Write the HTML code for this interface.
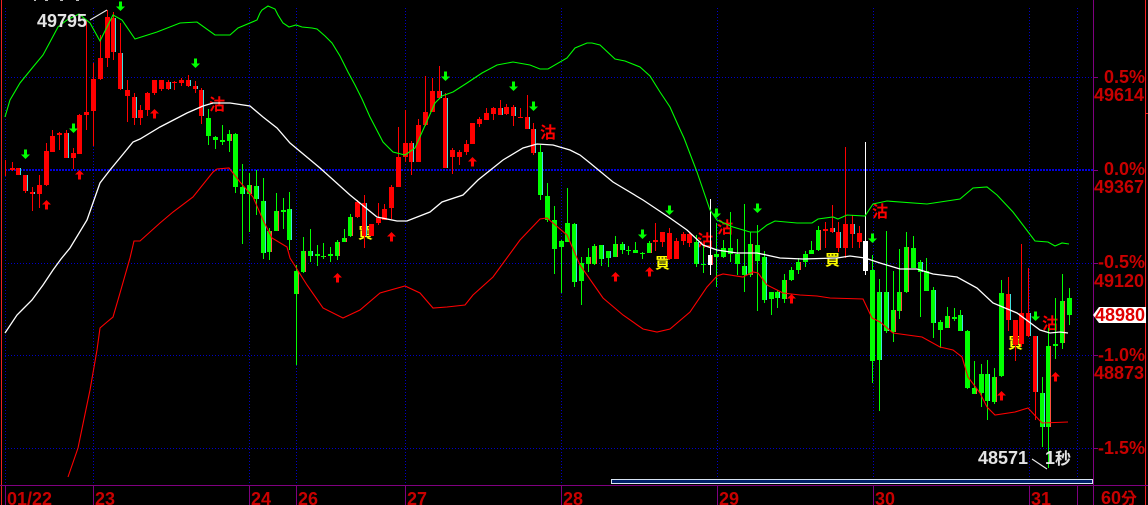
<!DOCTYPE html>
<html><head><meta charset="utf-8"><style>
html,body{margin:0;padding:0;background:#000;width:1148px;height:505px;overflow:hidden}
svg{display:block}
.a{font:bold 18px "Liberation Sans",sans-serif;fill:#c80000}
.w{font:bold 18px "Liberation Sans",sans-serif;fill:#e4e4e4}
.s{font:16px "WenQuanYi Zen Hei","Noto Sans CJK TC",sans-serif;fill:#f00;font-weight:bold}
.b{font:15px "WenQuanYi Zen Hei","Noto Sans CJK TC",sans-serif;fill:#ff0;font-weight:bold}
.c{font-family:"WenQuanYi Zen Hei","Noto Sans CJK TC",sans-serif;font-size:16px}
</style></head><body>
<svg width="1148" height="505" viewBox="0 0 1148 505" xmlns="http://www.w3.org/2000/svg">
<rect width="1148" height="505" fill="#000"/>
<g fill="none" stroke="#0000c8" stroke-dasharray="1 2" shape-rendering="crispEdges">
<path d="M5 77.5H1093M5 263.5H1093M5 355.5H1093M5 448.5H1093"/>
<path d="M5.5 8V484M93.5 8V484M249.5 8V484M296.5 8V484M405.5 8V484M561.5 8V484M717.5 8V484M873.5 8V484M1029.5 8V484M1077.5 8V484"/>
</g>
<path d="M5 170H1093" fill="none" stroke="#0000e0" stroke-width="2" stroke-dasharray="2 1" shape-rendering="crispEdges"/>
<text class="s" x="209" y="110">沽</text>
<text class="s" x="540" y="138">沽</text>
<text class="s" x="697" y="246">沽</text>
<text class="s" x="717" y="233">沽</text>
<text class="s" x="872" y="217">沽</text>
<text class="s" x="1042" y="329">沽</text>
<text class="b" x="358" y="238">買</text>
<text class="b" x="655" y="268">買</text>
<text class="b" x="825" y="265">買</text>
<text class="b" x="1008" y="348">買</text>
<g fill="none" shape-rendering="crispEdges">
<path stroke="#f00" d="M5.5 160V176M12.5 162V171M18.5 168V175M25.5 175V193M32.5 187V211M39.5 175V208M46.5 143V186M52.5 130V152M59.5 132V150M66.5 130V158M73.5 148V169M79.5 114V154M86.5 20V130M93.5 63V146M100.5 35V80M107.5 10V67M113.5 12V60M120.5 23V90M127.5 80V122M134.5 93V125M140.5 105V125M147.5 92V116M154.5 80V95M161.5 80V91M168.5 80V90M174.5 81V90M181.5 78V86M188.5 75V87M195.5 81V93M201.5 88V124M357.5 200V218M364.5 195V248M371.5 224V236M378.5 203V225M384.5 204V220M391.5 185V219M398.5 127V187M405.5 110V162M411.5 141V175M418.5 119V162M425.5 76V126M432.5 78V112M439.5 66V98M445.5 93V168M452.5 148V174M459.5 150V165M466.5 140V155M472.5 123V144M479.5 117V127M486.5 108V120M493.5 107V120M500.5 100V115M506.5 104V115M513.5 105V126M520.5 108V118M527.5 95V129M533.5 123V155M655.5 223V251M662.5 232V247M669.5 228V260M676.5 238V259M683.5 232V245M689.5 233V247M825.5 222V248M832.5 205V233M838.5 222V252M845.5 147V258M852.5 215V248M859.5 226V248M1008.5 277V331M1015.5 320V361M1021.5 244V347M1028.5 268V337M1035.5 336V420"/>
<path stroke="#f00" stroke-width="5" d="M12.5 168V170M18.5 168V175M25.5 175V191M32.5 192V194M39.5 185V194M46.5 151V185M52.5 136V152M59.5 133V135M66.5 133V158M73.5 153V158M79.5 115V154M86.5 112V115M93.5 79V111M100.5 58V79M107.5 17V58M113.5 18V52M120.5 53V89M127.5 90V96M134.5 97V118M140.5 110V118M147.5 93V110M154.5 80V93M161.5 80V89M168.5 82V89M174.5 82V83M181.5 80V83M188.5 80V86M195.5 86V89M201.5 90V116M357.5 202V217M364.5 203V236M371.5 224V236M378.5 218V223M384.5 209V220M391.5 187V208M398.5 157V187M405.5 143V157M411.5 143V162M418.5 125V162M425.5 112V125M432.5 91V112M439.5 91V98M445.5 98V168M452.5 150V157M459.5 152V157M466.5 144V152M472.5 123V144M479.5 119V124M486.5 113V120M493.5 108V114M500.5 108V115M506.5 107V114M513.5 107V116M520.5 117V118M527.5 117V129M533.5 129V153M655.5 240V242M662.5 232V242M669.5 233V259M676.5 241V259M683.5 234V241M689.5 234V243M825.5 229V231M832.5 228V232M838.5 232V248M845.5 224V248M852.5 224V234M859.5 233V242M1008.5 294V320M1015.5 320V345M1021.5 313V344M1028.5 313V336M1035.5 336V392"/>
<path stroke="#0f0" d="M208.5 109V145M215.5 136V149M222.5 125V145M229.5 130V152M235.5 133V193M242.5 164V244M249.5 173V232M256.5 170V215M263.5 178V259M269.5 228V260M276.5 193V231M283.5 198V229M289.5 192V250M296.5 265V365M303.5 237V273M310.5 229V262M317.5 245V266M323.5 243V259M330.5 247V262M337.5 240V260M344.5 229V242M350.5 214V237M540.5 145V200M547.5 183V222M554.5 206V274M561.5 240V293M567.5 188V242M574.5 223V287M581.5 257V305M588.5 248V272M594.5 244V265M601.5 245V266M608.5 251V267M615.5 236V257M622.5 242V254M628.5 246V255M635.5 242V253M642.5 252V259M649.5 241V253M696.5 235V267M703.5 245V273M716.5 223V287M723.5 240V258M730.5 212V262M737.5 239V275M744.5 204V292M750.5 232V277M757.5 225V311M764.5 251V303M771.5 292V315M777.5 290V308M784.5 274V303M791.5 267V281M798.5 258V274M805.5 251V267M811.5 241V254M818.5 226V251M872.5 255V383M879.5 279V411M886.5 231V333M893.5 271V342M899.5 249V319M906.5 232V293M913.5 236V268M920.5 260V317M926.5 258V291M933.5 287V338M940.5 320V348M947.5 307V328M954.5 308V321M960.5 310V331M967.5 330V389M974.5 361V394M981.5 364V407M987.5 360V420M994.5 368V404M1001.5 280V377M1042.5 377V447M1048.5 328V468M1055.5 298V359M1062.5 274V349M1069.5 288V325"/>
<path stroke="#0f0" stroke-width="5" d="M208.5 118V136M215.5 137V140M222.5 140V142M229.5 134V141M235.5 134V187M242.5 187V194M249.5 185V194M256.5 186V199M263.5 201V253M269.5 231V252M276.5 211V231M283.5 210V212M289.5 209V240M296.5 271V294M303.5 251V272M310.5 251V256M317.5 254V256M323.5 256V257M330.5 254V256M337.5 242V256M344.5 238V242M350.5 217V236M540.5 152V195M547.5 196V220M554.5 220V249M561.5 241V247M567.5 223V242M574.5 224V282M581.5 263V281M588.5 257V264M594.5 246V264M601.5 245V259M608.5 251V258M615.5 244V257M622.5 244V250M628.5 250V251M635.5 250V253M642.5 253V254M649.5 243V253M696.5 242V264M703.5 264V265M716.5 254V257M723.5 248V257M730.5 248V254M737.5 254V264M744.5 266V275M750.5 244V275M757.5 245V261M764.5 257V300M771.5 292V299M777.5 292V298M784.5 280V299M791.5 270V280M798.5 262V270M805.5 254V262M811.5 250V254M818.5 230V250M872.5 270V361M879.5 292V360M886.5 292V331M893.5 310V332M899.5 292V311M906.5 247V292M913.5 248V268M920.5 262V272M926.5 271V291M933.5 290V323M940.5 322V330M947.5 316V328M954.5 317V319M960.5 315V331M967.5 331V388M974.5 388V394M981.5 374V393M987.5 374V401M994.5 377V402M1001.5 293V376M1042.5 393V427M1048.5 346V427M1055.5 344V346M1062.5 301V343M1069.5 298V315"/>
<path stroke="#fff" d="M710.5 199V275M865.5 142V275"/>
<path stroke="#fff" stroke-width="5" d="M710.5 255V265M865.5 241V271"/>
<path stroke="#40e0e0" d="M20.5 168V175M27.5 175V191M34.5 192V194M68.5 133V158M115.5 18V52M122.5 53V89M136.5 97V118M170.5 82V89M190.5 80V86M197.5 86V89M203.5 90V116M366.5 203V236M413.5 143V162M441.5 91V98M447.5 98V168M502.5 108V115M515.5 107V116M529.5 117V129M535.5 129V153M834.5 228V232M840.5 232V248M854.5 224V234M1010.5 294V320M1030.5 313V336M1037.5 336V392M244.5 187V194M258.5 186V199M265.5 201V253M291.5 209V240M312.5 251V256M542.5 152V195M576.5 224V282M603.5 245V259M610.5 251V258M624.5 244V250M698.5 242V264M746.5 266V275M766.5 257V300M779.5 292V298M881.5 292V360M888.5 292V331M922.5 262V272M935.5 290V323M962.5 315V331M989.5 374V401M1044.5 393V427"/>
<path stroke="#ff5040" d="M231.5 134V141M251.5 185V194M271.5 231V252M278.5 211V231M298.5 271V294M305.5 251V272M325.5 256V257M339.5 242V256M346.5 238V242M352.5 217V236M590.5 257V264M596.5 246V264M617.5 244V257M651.5 243V253M752.5 244V275M786.5 280V299M800.5 262V270M820.5 230V250M895.5 310V332M901.5 292V311M908.5 247V292M949.5 316V328M976.5 388V394M996.5 377V402M1050.5 346V427M1064.5 301V343M712.5 255V265"/>
</g>
<g fill="none" stroke-width="1.1">
<path stroke="#0f0" d="M5 117 10 100 20 83 33 67 43 55 50 42 58 27 67 20 79 14 90 23 100 41 107 27 113 15 122 20 135 39 157 32 180 23 197 22 215 35 230 35 238 28 257 20 260 13 262 10 268 6 275 9 278 15 283 23 289 27 296 25 302 27 312 28 317 29 325 36 332 43 340 56 348 72 355 85 362 99 370 117 383 142 393 152 405 155 415 148 423 130 435 103 442 96 453 92 467 83 482 73 497 65 513 62 530 65 540 69 548 69 567 58 575 48 587 43 592 43 600 45 615 59 625 61 640 67 650 76 660 92 670 107 678 125 684 138 697 172 710 210 717 220 733 227 750 232 758 232 767 225 775 221 797 223 812 223 818 219 833 217 838 219 847 215 865 216 873 204 887 201 927 204 960 199 973 188 987 187 997 195 1013 212 1035 241 1048 242 1055 246 1062 243 1069 244"/>
<path stroke="#fff" stroke-width="1.3" d="M5 333 17 315 22 310 32 300 43 285 53 270 61 259 70 248 87 220 100 183 110 170 133 142 140 139 160 127 187 113 203 106 213 103 230 103 250 106 263 117 277 128 290 143 320 168 350 195 377 217 397 221 407 221 430 212 442 202 463 195 478 180 503 160 523 148 537 144 553 145 570 150 580 155 590 163 613 182 643 200 670 218 687 230 703 245 717 250 737 253 757 253 780 258 803 259 837 258 850 256 865 258 880 263 900 269 917 269 933 274 957 277 977 288 993 303 1017 313 1040 330 1050 333 1060 332 1068 333"/>
<path stroke="#f00" d="M68 477 78 448 90 390 97 350 100 328 107 322 113 317 120 293 130 258 134 241 140 241 160 223 173 212 193 197 213 172 217 169 229 168 240 182 253 197 263 220 272 238 287 247 290 258 307 285 323 308 343 318 360 310 380 293 405 286 420 293 433 308 447 307 465 305 473 295 493 277 520 240 540 219 547 218 567 235 580 265 603 298 623 315 643 329 657 332 670 329 690 312 707 287 717 276 723 274 743 277 753 272 758 273 767 285 783 293 800 295 817 296 830 298 863 299 872 318 880 322 893 333 922 337 940 347 953 350 962 357 968 377 980 393 987 407 995 415 1015 412 1028 408 1042 423 1068 422"/>
<path stroke="#e8e8e8" d="M90 20 107 10M1032 459 1047 469"/>
</g>
<path fill="#0f0" d="M120.5 11l-4.500-4.500h3v-5h3v5h3zM25.500 159l-4.500-4.500h3v-5h3v5h3zM73.500 133l-4.500-4.500h3v-5h3v5h3zM195.500 68l-4.500-4.500h3v-5h3v5h3zM445.500 81l-4.500-4.500h3v-5h3v5h3zM513.500 91l-4.500-4.500h3v-5h3v5h3zM533.500 111l-4.500-4.500h3v-5h3v5h3zM669.500 215l-4.500-4.500h3v-5h3v5h3zM642.500 239l-4.500-4.500h3v-5h3v5h3zM716.500 218l-4.500-4.500h3v-5h3v5h3zM757.500 213l-4.500-4.500h3v-5h3v5h3zM872.500 243l-4.500-4.500h3v-5h3v5h3zM1035.500 321l-4.500-4.500h3v-5h3v5h3z"/>
<path fill="#f00" d="M46.500 200l-4.500 4.500h3v5h3v-5h3zM79.500 170l-4.500 4.500h3v5h3v-5h3zM154.500 109l-4.500 4.500h3v5h3v-5h3zM337.500 273l-4.500 4.500h3v5h3v-5h3zM391.500 232l-4.500 4.500h3v5h3v-5h3zM472.500 157l-4.500 4.500h3v5h3v-5h3zM615.500 272l-4.500 4.500h3v5h3v-5h3zM649.500 267l-4.500 4.500h3v5h3v-5h3zM791.500 294l-4.500 4.500h3v5h3v-5h3zM1001.500 391l-4.500 4.500h3v5h3v-5h3zM1055.500 372l-4.500 4.500h3v5h3v-5h3z"/>
<g shape-rendering="crispEdges">
<rect x="1" y="0" width="1" height="505" fill="#f02020"/>
<rect x="1145" y="0" width="1" height="505" fill="#f02020"/>
<rect x="1145" y="113" width="3" height="1" fill="#f02020"/>
<rect x="1093" y="0" width="1" height="505" fill="#800080"/>
<rect x="0" y="485" width="1148" height="1" fill="#800080"/>
<path stroke="#800080" fill="none" d="M5.500 485V505M93.500 485V505M249.500 485V505M296.500 485V505M405.500 485V505M561.500 485V505M717.500 485V505M873.500 485V505M1029.500 485V505M1077.500 485V505M1093 77.500H1098M1093 170.500H1098M1093 263.500H1098M1093 355.500H1098M1093 448.500H1098"/>
<rect x="611.500" y="479.500" width="481" height="4" fill="#00206a" stroke="#d8e4f4"/>
</g>
<rect x="34" y="0" width="2" height="1" fill="#bbb"/><rect x="45" y="0" width="3" height="1" fill="#bbb"/><rect x="60" y="0" width="3" height="1" fill="#bbb"/><rect x="76" y="0" width="3" height="1" fill="#bbb"/>
<text class="w" x="37" y="27">49795</text>
<text class="w" x="978" y="464">48571</text>
<text class="w" x="1045" y="464">1<tspan class="c">秒</tspan></text>
<text class="a" x="1104" y="83">0.5%</text>
<text class="a" x="1094" y="101">49614</text>
<text class="a" x="1104" y="175">0.0%</text>
<text class="a" x="1094" y="193">49367</text>
<text class="a" x="1098" y="268">-0.5%</text>
<text class="a" x="1094" y="287">49120</text>
<path fill="#fff" d="M1093 315 1099 307H1146V323H1099z"/>
<text class="a" x="1095" y="321" style="fill:#e00000">48980</text>
<text class="a" x="1098" y="361">-1.0%</text>
<text class="a" x="1094" y="379">48873</text>
<text class="a" x="1098" y="454">-1.5%</text>
<text class="a" x="7" y="505">01/22</text>
<text class="a" x="95" y="505">23</text>
<text class="a" x="251" y="505">24</text>
<text class="a" x="298" y="505">26</text>
<text class="a" x="407" y="505">27</text>
<text class="a" x="563" y="505">28</text>
<text class="a" x="719" y="505">29</text>
<text class="a" x="875" y="505">30</text>
<text class="a" x="1031" y="505">31</text>
<text class="a" x="1101" y="504">60<tspan class="c">分</tspan></text>
</svg>
</body></html>
